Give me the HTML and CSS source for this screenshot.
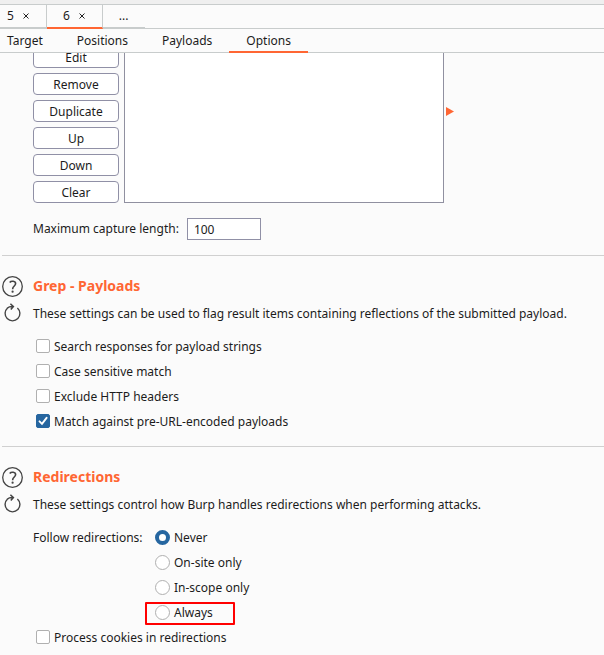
FILE: index.html
```html
<!DOCTYPE html>
<html lang="en">
<head>
<meta charset="utf-8">
<title>Intruder options</title>
<link rel="stylesheet" href="styles.css">
</head>
<body>
<svg class="sprite" aria-hidden="true">
  <symbol id="help" viewBox="0 0 21 21">
    <circle cx="10.5" cy="10.5" r="9.8" fill="none" stroke="#444" stroke-width="1.3"/>
    <path d="M7.7 6.4C9.2 4.6 13.7 4.7 13.6 7.8C13.5 10 10.6 10.2 10.6 13.2" fill="none" stroke="#444" stroke-width="1.6"/>
    <circle cx="10.6" cy="15.7" r="1.1" fill="#444"/>
  </symbol>
  <symbol id="reset" viewBox="0 0 21 21">
    <path d="M5.6 4.9A7.4 7.4 0 1 0 15.4 4.9" fill="none" stroke="#444" stroke-width="1.4"/>
    <path d="M5.2 5.2Q7.2 3.4 11 3.6M8.4 .8L11.4 3.6L8.8 6.6" fill="none" stroke="#444" stroke-width="1.5"/>
  </symbol>
</svg>
<div class="strip"></div>
<nav class="attacks" aria-label="Attacks">
  <div class="attack"><a href="#a5">5</a><button class="close" aria-label="Close 5"><svg viewBox="0 0 6 6"><path d="M.5 .5L5.5 5.5M5.5 .5L.5 5.5"/></svg></button></div>
  <div class="attack current"><a href="#a6">6</a><button class="close" aria-label="Close 6"><svg viewBox="0 0 6 6"><path d="M.5 .5L5.5 5.5M5.5 .5L.5 5.5"/></svg></button></div>
  <div class="attack more"><a href="#new">...</a></div>
</nav>
<nav class="views" aria-label="Views">
  <a href="#target">Target</a>
  <a href="#positions">Positions</a>
  <a href="#payloads">Payloads</a>
  <a href="#options" class="active">Options</a>
</nav>
<main>
  <section class="extract">
    <div class="editor">
      <div class="buttons">
        <button>Edit</button>
        <button>Remove</button>
        <button>Duplicate</button>
        <button>Up</button>
        <button>Down</button>
        <button>Clear</button>
      </div>
      <div class="list"></div>
      <svg class="arrow" viewBox="0 0 8 9"><path d="M0 0L8 4.5L0 9Z"/></svg>
    </div>
    <div class="field">
      <label for="length">Maximum capture length:</label>
      <input id="length" type="text" value="100">
    </div>
  </section>
  <section class="group">
    <div class="title"><svg class="icon"><use href="#help"/></svg><h2>Grep - Payloads</h2></div>
    <div class="about"><svg class="icon"><use href="#reset"/></svg><p>These settings can be used to flag result items containing reflections of the submitted payload.</p></div>
    <div class="choices">
      <label class="choice"><input type="checkbox">Search responses for payload strings</label>
      <label class="choice"><input type="checkbox">Case sensitive match</label>
      <label class="choice"><input type="checkbox">Exclude HTTP headers</label>
      <label class="choice"><input type="checkbox" checked>Match against pre-URL-encoded payloads</label>
    </div>
  </section>
  <section class="group">
    <div class="title"><svg class="icon"><use href="#help"/></svg><h2>Redirections</h2></div>
    <div class="about"><svg class="icon"><use href="#reset"/></svg><p>These settings control how Burp handles redirections when performing attacks.</p></div>
    <div class="follow" role="radiogroup" aria-labelledby="follow">
      <span id="follow" class="caption">Follow redirections:</span>
      <div>
        <label class="choice"><input type="radio" name="follow" checked>Never</label>
        <label class="choice"><input type="radio" name="follow">On-site only</label>
        <label class="choice"><input type="radio" name="follow">In-scope only</label>
        <label class="choice marked"><input type="radio" name="follow">Always</label>
      </div>
    </div>
    <div class="cookies"><label class="choice"><input type="checkbox">Process cookies in redirections</label></div>
  </section>
</main>
</body>
</html>
```
FILE: styles.css
```css
*, *::after { box-sizing: border-box; }

body {
  margin: 0;
  background: #fbfbfb;
  color: #1c1c1c;
  font: 12px/16px "Noto Sans", sans-serif;
  overflow: hidden;
}

a { color: inherit; text-decoration: none; }
button, input { font: inherit; color: inherit; margin: 0; }
h2, p { margin: 0; }
.sprite { display: none; }

.strip { height: 5px; background: #efefef; border-bottom: 1px solid #c8cccc; }

.attacks { display: flex; height: 24px; border-bottom: 1px solid #c8cccc; }
.attack {
  display: flex;
  align-items: center;
  gap: 9px;
  padding: 0 17px 0 7px;
  border-right: 1px solid #c8cccc;
  border-bottom: 1px solid #c8cccc;
}
.attack.current {
  height: 24px;
  padding: 0 17px 0 16px;
  border-bottom: 2px solid #ff6633;
}
.attack.more { padding: 0 17px 0 16px; border-right: 0; }
.close { display: flex; padding: 0; border: 0; background: none; }
.close svg { width: 6px; height: 6px; stroke: #222; stroke-width: 1; }

.views { display: flex; height: 24px; border-bottom: 1px solid #c8cccc; }
.views a { height: 24px; padding: 4px 17px 0; }
.views a:first-child { padding-left: 7px; }
.views .active { border-bottom: 2px solid #ff6633; }

.extract { padding-bottom: 15px; }
.editor { display: flex; height: 150px; padding-left: 33px; overflow: hidden; }
.buttons {
  display: flex;
  flex-direction: column;
  justify-content: flex-end;
  gap: 5px;
  width: 86px;
  margin-right: 5px;
}
.buttons button {
  flex: none;
  height: 22px;
  padding: 1px 0 0;
  background: #fff;
  border: 1px solid #9090a6;
  border-radius: 4px;
}
.list { flex: 0 1 320px; background: #fff; border: 1px solid #9090a0; border-top: 0; }
.arrow { width: 8px; height: 9px; margin: 54px 0 0 2px; fill: #ff6633; }

.field { display: flex; align-items: center; gap: 8px; margin-top: 15px; padding-left: 33px; }
.field input {
  width: 74px;
  height: 22px;
  padding: 0 6px;
  background: #fff;
  border: 1px solid #9090a6;
}

.group { margin-left: 2px; padding: 18px 0 12px; border-top: 1px solid #d0d0d0; }
.title, .about { display: flex; align-items: center; gap: 10px; }
.title { height: 25px; }
.about { height: 29px; white-space: nowrap; }
.icon { flex: none; width: 21px; height: 21px; }
h2 { padding-bottom: 2px; font-size: 14px; line-height: 20px; font-weight: 700; color: #ff6633; }

.choices, .cookies { padding-left: 34px; }
.choices, .follow { margin-top: 6px; }
.choice { display: flex; align-items: center; width: max-content; height: 25px; gap: 4px; }

input[type="checkbox"], input[type="radio"] {
  appearance: none;
  width: 14px;
  height: 14px;
  background: #fff;
  border: 1px solid #b0b0b0;
  border-radius: 2px;
}
input[type="checkbox"] { margin-bottom: 1px; }
input[type="checkbox"]:checked {
  border-color: #2666a0;
  background: #2666a0 url("data:image/svg+xml,%3Csvg xmlns='http://www.w3.org/2000/svg' viewBox='0 0 12 12'%3E%3Cpath d='M2.5 6.3L5 8.8L9.6 2.8' fill='none' stroke='white' stroke-width='1.9' stroke-linecap='round'/%3E%3C/svg%3E") center / 12px no-repeat;
}
input[type="radio"] { width: 15px; height: 15px; border-radius: 50%; }
input[type="radio"]:checked { border: 4px solid #2666a0; }

.follow { display: flex; padding-left: 31px; }
.caption { width: 122px; line-height: 25px; }

.marked { position: relative; }
.marked::after {
  content: "";
  position: absolute;
  left: -10px;
  right: -22px;
  top: 2px;
  height: 23px;
  border: 2px solid #ff0000;
  border-radius: 1px;
}
```
